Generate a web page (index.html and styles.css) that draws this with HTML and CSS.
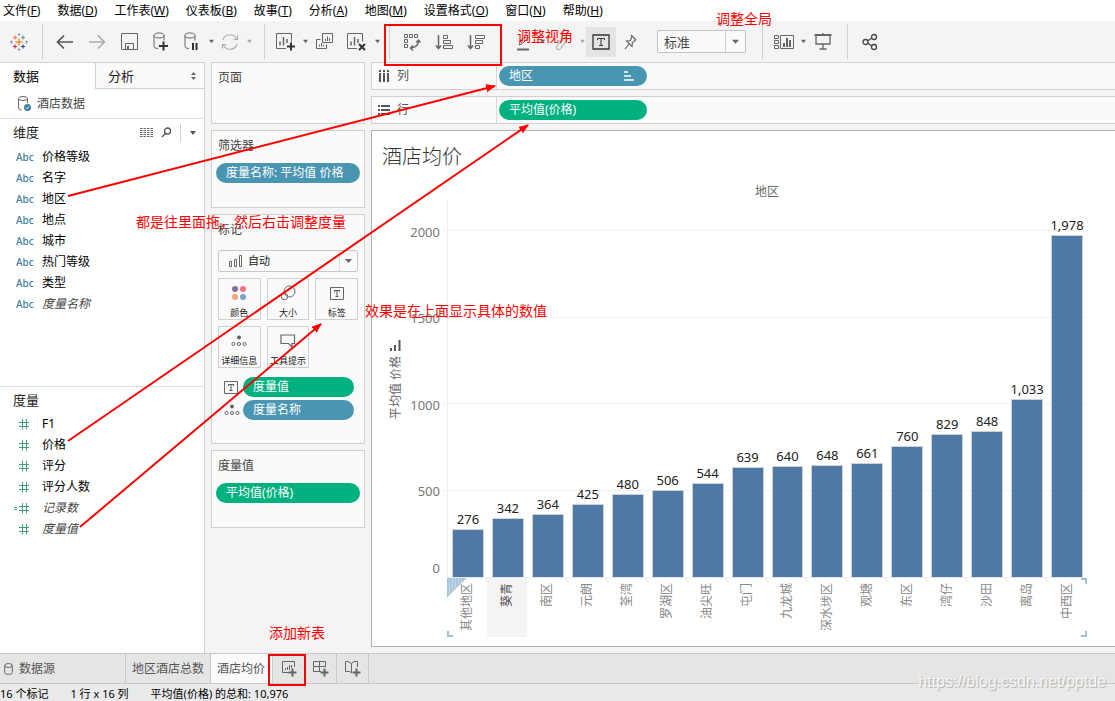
FILE: index.html
```html
<!DOCTYPE html>
<html lang="zh-CN">
<head>
<meta charset="utf-8">
<title>酒店均价</title>
<link rel="stylesheet" href="styles.css">
</head>
<body>
<svg class="defs" aria-hidden="true">
  <symbol id="caret" viewBox="0 0 8 6"><path d="M1 1h6L4 5z" fill="currentColor"/></symbol>
  <symbol id="hash" viewBox="0 0 12 12"><path d="M1 4.500h10M1 8.500h10M4.500 1v10.500M8.500 1v10.500" stroke="#3fa27b" fill="none"/></symbol>
  <symbol id="tbox" viewBox="0 0 14 13"><path d="M.5 .5h13v12H.5z" fill="none" stroke="#666"/><path d="M4.500 5V3.500h5V5M7 3.500v6M5.500 9.500h3" fill="none" stroke="#555"/></symbol>
  <symbol id="detail" viewBox="0 0 16 12"><circle cx="8" cy="2.500" r="2" fill="#666"/><g fill="none" stroke="#666"><circle cx="2.500" cy="9" r="1.600"/><circle cx="8" cy="9" r="1.600"/><circle cx="13.500" cy="9" r="1.600"/></g></symbol>
</svg>

<nav class="menu">
  <a href="#">文件(<u>F</u>)</a><a href="#">数据(<u>D</u>)</a><a href="#">工作表(<u>W</u>)</a><a href="#">仪表板(<u>B</u>)</a><a href="#">故事(<u>T</u>)</a><a href="#">分析(<u>A</u>)</a><a href="#">地图(<u>M</u>)</a><a href="#">设置格式(<u>O</u>)</a><a href="#">窗口(<u>N</u>)</a><a href="#">帮助(<u>H</u>)</a>
</nav>

<header class="toolbar">
  <button class="tool logo" aria-label="主页"><svg width="18" height="18" viewBox="0 0 18 18" fill="none" stroke-width="1.200"><path d="M9 5.500v7M5.500 9h7" stroke="#f28e2b" stroke-width="1.500"/><path d="M5 2.500v4M3 4.500h4" stroke="#e8804c"/><path d="M13 2.500v4M11 4.500h4" stroke="#5b9aa8"/><path d="M5 11.500v4M3 13.500h4" stroke="#c8324a"/><path d="M13 11.500v4M11 13.500h4" stroke="#2f4b8a"/><path d="M9 0v3M7.500 1.500h3M9 15v3M7.500 16.500h3" stroke="#8090b5" stroke-width=".8"/><path d="M1.500 7.500v3M0 9h3M16.500 7.500v3M15 9h3" stroke="#7a7cb0" stroke-width=".8"/></svg></button>
  <i class="sep first"></i>
  <button class="tool" aria-label="撤消"><svg width="18" height="16" viewBox="0 0 18 16" fill="none" stroke="#555" stroke-width="1.700"><path d="M1.500 8H17M8 1.500L1.500 8 8 14.500"/></svg></button>
  <button class="tool" aria-label="重做"><svg width="18" height="16" viewBox="0 0 18 16" fill="none" stroke="#aaa" stroke-width="1.500"><path d="M1 8h15.500M10 1.500L16.500 8 10 14.500"/></svg></button>
  <button class="tool" aria-label="保存"><svg width="17" height="17" viewBox="0 0 17 17" fill="none" stroke="#666"><path d="M.5 .5h16v16H.5zM4.500 16v-5.500h8V16"/><path d="M6 13h2v3H6z" fill="#666" stroke="none"/></svg></button>
  <button class="tool" aria-label="新建数据源"><svg width="18" height="20" viewBox="0 0 18 20" fill="none" stroke="#666"><ellipse cx="7" cy="3.500" rx="5" ry="2.500"/><path d="M2 3.500v11q0 2 4 2M12 3.500v5"/><path d="M11.500 9.500v9M7 14h9" stroke="#333" stroke-width="2"/></svg></button>
  <button class="tool narrow" aria-label="暂停自动更新"><svg width="18" height="20" viewBox="0 0 18 20" fill="none" stroke="#666"><ellipse cx="7" cy="3.500" rx="5" ry="2.500"/><path d="M2 3.500v11q0 2 4 2M12 3.500v5"/><path d="M10 11v7M13.500 11v7" stroke="#333" stroke-width="2"/></svg></button>
  <button class="drop" aria-label="更新选项"><svg width="7" height="5"><use href="#caret"/></svg></button>
  <button class="tool narrow" aria-label="刷新"><svg width="18" height="18" viewBox="0 0 18 18" fill="none" stroke="#b0b0b0" stroke-width="1.200"><path d="M2 7a7.200 7.200 0 0 1 13.500-1M16 11a7.200 7.200 0 0 1-13.500 1"/><path d="M16.500 2.500v4h-4M1.500 15.500v-4h4"/></svg></button>
  <button class="drop dim" aria-label="刷新选项"><svg width="7" height="5"><use href="#caret"/></svg></button>
  <i class="sep"></i>
  <button class="tool narrow" aria-label="新建工作表"><svg width="20" height="20" viewBox="0 0 20 20" fill="none" stroke="#666"><path d="M10 16.500H.5v-15h15v8"/><path d="M4 9.500v4M7.500 5v8.500M11 7v4" stroke-width="1.500"/><path d="M15 10.500v8M11 14.500h8" stroke="#333" stroke-width="2"/></svg></button>
  <button class="drop" aria-label="新建选项"><svg width="7" height="5"><use href="#caret"/></svg></button>
  <button class="tool" aria-label="复制"><svg width="18" height="18" viewBox="0 0 18 18" fill="none" stroke="#666"><path d="M6.500 .5h10v9h-10zM4.500 6.500h-4v9h10v-4M9.500 8V6M11.500 8V3.500M13.500 8V5M3.500 13.500v-2M5.500 13.500V10M7.500 13.500v-2"/></svg></button>
  <button class="tool" aria-label="清除"><svg width="20" height="20" viewBox="0 0 20 20" fill="none" stroke="#666"><path d="M10 16.500H.5v-15h15v8"/><path d="M4 9.500v4M7.500 5v8.500M11 7v4" stroke-width="1.500"/><path d="M12 12l6 6M18 12l-6 6" stroke="#333" stroke-width="2"/></svg></button>
  <button class="drop" aria-label="清除选项"><svg width="7" height="5"><use href="#caret"/></svg></button>
  <i class="sep tight"></i>
  <button class="tool" aria-label="交换行和列"><svg width="18" height="18" viewBox="0 0 18 18" fill="none" stroke="#666"><path d="M1.500 1.500h3v3h-3zM6.500 1.500h3v3h-3zM11.500 1.500h3v3h-3zM1.500 6.500h3v3h-3zM1.500 11.500h3v3h-3z"/><path d="M15.500 7.500c0 5-3 7-7.500 7.500M13 9.500l2.500-2.500 2 2.500M10 12.500L7.500 15l2.500 2.500" stroke-width="1.400"/></svg></button>
  <button class="tool" aria-label="升序"><svg width="19" height="16" viewBox="0 0 19 16" fill="none" stroke="#666"><path d="M3.500 1v13M1 11.500l2.500 3 2.500-3" stroke-width="1.500"/><path d="M8.500 1.500h4v3h-4zM8.500 6.500h7v3h-7zM8.500 11.500h9v3h-9z"/></svg></button>
  <button class="tool" aria-label="降序"><svg width="19" height="16" viewBox="0 0 19 16" fill="none" stroke="#666"><path d="M3.500 1v13M1 11.500l2.500 3 2.500-3" stroke-width="1.500"/><path d="M8.500 1.500h9v3h-9zM8.500 6.500h7v3h-7zM8.500 11.500h4v3h-4z"/></svg></button>
  <button class="tool narrow spaced" aria-label="突出显示"><svg width="16" height="20" viewBox="0 0 16 20" fill="none" stroke="#666"><path d="M4 13l1.500-4L11 3l2.500 2.500-6 6z"/><path d="M2 17.500h12" stroke-width="2"/></svg></button>
  <button class="drop" aria-label="突出显示选项"><svg width="7" height="5"><use href="#caret"/></svg></button>
  <button class="tool" aria-label="组成员"><svg width="14" height="18" viewBox="0 0 14 18" fill="none" stroke="#bbb" stroke-width="1.300"><path d="M5 10l4-5c2-2 4 0 3 2l-6 8c-2 3-6 1-4-2l5-7"/></svg></button>
  <button class="drop dim" aria-label="组选项"><svg width="7" height="5"><use href="#caret"/></svg></button>
  <button class="tool narrow active" aria-label="显示标记标签"><svg width="18" height="16" viewBox="0 0 18 16" fill="none" stroke="#333"><path d="M1 1h16v14H1z" stroke-width="1.300"/><path d="M5.500 6V4.500h7V6M9 4.500v7M7 11.500h4"/></svg></button>
  <button class="tool narrow" aria-label="固定轴"><svg width="14" height="18" viewBox="0 0 14 18" fill="none" stroke="#666" stroke-width="1.200"><path d="M7 2l5 5M8 3L6.500 7.500 2.500 8l5.500 5.500.500-4L12 6.500M5 11l-4 5"/></svg></button>
  <select class="fit" aria-label="适合"><option>标准</option></select>
  <i class="sep wide"></i>
  <button class="tool narrow" aria-label="智能推荐"><svg width="20" height="14" viewBox="0 0 20 14" fill="none" stroke="#666"><path d="M.5 .5h4v3h-4zM.5 5.500h4v3h-4zM.5 10.500h4v3h-4zM6.500 .5h13v13h-13z"/><path d="M10 8v4M13 3v9M16 5v7" stroke-width="2"/></svg></button>
  <button class="drop" aria-label="推荐选项"><svg width="7" height="5"><use href="#caret"/></svg></button>
  <button class="tool" aria-label="演示模式"><svg width="18" height="17" viewBox="0 0 18 17" fill="none" stroke="#666"><path d="M.5 2h17" stroke-width="2"/><path d="M2 2.500v8.500h14V2.500M9 11v5M5.500 16h7M9 0v2" stroke-width="1.300"/></svg></button>
  <i class="sep tight"></i>
  <button class="tool" aria-label="共享"><svg width="16" height="18" viewBox="0 0 16 18" fill="none" stroke="#444" stroke-width="1.300"><circle cx="3.500" cy="9" r="2.500"/><circle cx="12" cy="4" r="2.500"/><circle cx="12" cy="14" r="2.500"/><path d="M5.700 7.700l4-2.400M5.700 10.300l4 2.400"/></svg></button>
</header>

<main class="work">
  <aside class="data">
    <div class="pane-tabs">
      <button class="pane-tab on">数据</button>
      <button class="pane-tab">分析<svg width="7" height="8" viewBox="0 0 7 8"><path d="M1 3h5L3.500 0zM1 5h5L3.500 8z" fill="#666"/></svg></button>
    </div>
    <div class="source"><svg width="15" height="16" viewBox="0 0 15 16" fill="none" stroke="#666"><ellipse cx="6" cy="2.500" rx="4.500" ry="2"/><path d="M1.500 2.500v9.500q0 1.500 3 2M10.500 2.500V7"/><circle cx="10.500" cy="11.500" r="3.500" fill="#3f7f9f" stroke="none"/><path d="M9 11.500l1 1 2-2" stroke="#fff"/></svg>酒店数据</div>
    <section class="fields">
      <h2>维度<span class="tools"><svg width="13" height="10" viewBox="0 0 13 10" stroke="#666" stroke-dasharray="2.500 1"><path d="M0 .5h13M0 2.500h13M0 4.500h13M0 6.500h13M0 8.500h13"/></svg><svg width="11" height="11" viewBox="0 0 11 11" fill="none" stroke="#555" stroke-width="1.300"><circle cx="6.500" cy="4" r="3"/><path d="M4.500 6.500L1 10"/></svg><i></i><svg width="8" height="6"><use href="#caret"/></svg></span></h2>
      <ul>
        <li><b>Abc</b>价格等级</li><li><b>Abc</b>名字</li><li><b>Abc</b>地区</li><li><b>Abc</b>地点</li><li><b>Abc</b>城市</li><li><b>Abc</b>热门等级</li><li><b>Abc</b>类型</li><li><b>Abc</b><em>度量名称</em></li>
      </ul>
    </section>
    <section class="fields measures">
      <h2>度量</h2>
      <ul>
        <li><b><svg width="12" height="12"><use href="#hash"/></svg></b>F1</li>
        <li><b><svg width="12" height="12"><use href="#hash"/></svg></b>价格</li>
        <li><b><svg width="12" height="12"><use href="#hash"/></svg></b>评分</li>
        <li><b><svg width="12" height="12"><use href="#hash"/></svg></b>评分人数</li>
        <li><b class="calc"><svg width="16" height="12" viewBox="0 0 16 12" fill="none" stroke="#3fa27b"><path d="M5 4.500h10M5 8.500h10M8.500 1v10.500M12.500 1v10.500M0 5.500h3M0 7.500h3"/></svg></b><em>记录数</em></li>
        <li><b><svg width="12" height="12"><use href="#hash"/></svg></b><em>度量值</em></li>
      </ul>
    </section>
  </aside>

  <div class="cards">
    <section class="card pages"><h3>页面</h3></section>
    <section class="card filters"><h3>筛选器</h3><div class="pill blue">度量名称: 平均值 价格</div></section>
    <section class="card marks">
      <h3>标记</h3>
      <div class="mark-type"><svg width="14" height="12" viewBox="0 0 14 12" fill="none" stroke="#666"><path d="M.5 6.500h2v5h-2zM5.500 4.500h2v7h-2zM10.500 .5h2v11h-2z"/></svg><select aria-label="标记类型"><option>自动</option></select></div>
      <div class="mark-grid">
        <button><svg width="16" height="16" viewBox="0 0 16 16"><circle cx="4" cy="4" r="3" fill="#8a6f9b"/><circle cx="12" cy="4" r="3" fill="#fb6f82"/><circle cx="4" cy="12" r="3" fill="#f5a77b"/><circle cx="12" cy="12" r="3" fill="#7ba3cc"/></svg>颜色</button>
        <button><svg width="16" height="16" viewBox="0 0 16 16" fill="none" stroke="#666"><circle cx="9.500" cy="6.500" r="5.500"/><circle cx="4.500" cy="11.500" r="3.200"/></svg>大小</button>
        <button><svg width="14" height="16" viewBox="0 0 14 16"><use href="#tbox" y="2" width="14" height="13"/></svg>标签</button>
        <button><svg width="16" height="16" viewBox="0 0 16 16"><use href="#detail" y="2" width="16" height="12"/></svg>详细信息</button>
        <button><svg width="16" height="16" viewBox="0 0 16 16" fill="none" stroke="#666" stroke-width="1.200"><path d="M1 2h13.500v8.500H12V14l-3.500-3.500H1z"/></svg>工具提示</button>
      </div>
      <div class="mark-row"><svg width="14" height="13"><use href="#tbox"/></svg><div class="pill green">度量值</div></div>
      <div class="mark-row"><svg width="16" height="12"><use href="#detail"/></svg><div class="pill blue">度量名称</div></div>
    </section>
    <section class="card values"><h3>度量值</h3><div class="pill green">平均值(价格)</div></section>
  </div>

  <div class="canvas">
    <div class="shelf"><div class="shelf-name"><svg width="12" height="12" viewBox="0 0 12 12" stroke="#555" stroke-width="2"><path d="M2 0v2M6 0v2M10 0v2M2 3v9M6 3v9M10 3v9"/></svg>列</div><div class="pill blue">地区<svg width="11" height="10" viewBox="0 0 11 10" stroke="#fff" stroke-width="1.500"><path d="M0 1h4M0 5h7M0 9h10"/></svg></div></div>
    <div class="shelf"><div class="shelf-name"><svg width="12" height="12" viewBox="0 0 12 12" stroke="#555" stroke-width="2"><path d="M0 2h2M0 6h2M0 10h2M3 2h9M3 6h9M3 10h9"/></svg>行</div><div class="pill green">平均值(价格)</div></div>
    <section class="view">
      <h1>酒店均价</h1>
      <div class="chart">
        <div class="axis-title"><svg width="11" height="11" viewBox="0 0 11 11" stroke="#555" stroke-width="2"><path d="M1 8v3M5 5v6M9.500 0v11"/></svg><span>平均值 价格</span></div>
        <div class="dim-name">地区</div>
        <div class="ticks"><span style="--v:2000">2000</span><span style="--v:1500">1500</span><span style="--v:1000">1000</span><span style="--v:500">500</span><span class="zero" style="--v:0">0</span></div>
        <div class="plot">
          <i class="grid" style="--v:2000"></i><i class="grid" style="--v:1500"></i><i class="grid" style="--v:1000"></i><i class="grid" style="--v:500"></i>
          <div class="col">276<div class="bar" style="--v:276"></div></div>
          <div class="col">342<div class="bar" style="--v:342"></div></div>
          <div class="col">364<div class="bar" style="--v:364"></div></div>
          <div class="col">425<div class="bar" style="--v:425"></div></div>
          <div class="col">480<div class="bar" style="--v:480"></div></div>
          <div class="col">506<div class="bar" style="--v:506"></div></div>
          <div class="col">544<div class="bar" style="--v:544"></div></div>
          <div class="col">639<div class="bar" style="--v:639"></div></div>
          <div class="col">640<div class="bar" style="--v:640"></div></div>
          <div class="col">648<div class="bar" style="--v:648"></div></div>
          <div class="col">661<div class="bar" style="--v:661"></div></div>
          <div class="col">760<div class="bar" style="--v:760"></div></div>
          <div class="col">829<div class="bar" style="--v:829"></div></div>
          <div class="col">848<div class="bar" style="--v:848"></div></div>
          <div class="col">1,033<div class="bar" style="--v:1033"></div></div>
          <div class="col">1,978<div class="bar" style="--v:1978"></div></div>
        </div>
        <div class="names">
          <div><span>其他地区</span></div><div class="hover"><span>葵青</span></div><div><span>南区</span></div><div><span>元朗</span></div><div><span>荃湾</span></div><div><span>罗湖区</span></div><div><span>油尖旺</span></div><div><span>屯门</span></div><div><span>九龙城</span></div><div><span>深水埗区</span></div><div><span>观塘</span></div><div><span>东区</span></div><div><span>湾仔</span></div><div><span>沙田</span></div><div><span>离岛</span></div><div><span>中西区</span></div>
          <svg class="corner" width="19" height="19" viewBox="0 0 19 19"><path d="M0 0h19L0 19z" fill="#c3d9ea"/><path d="M1 0v18M4 0v15M7 0v12M10 0v9M13 0v6M16 0v3" stroke="#8db4d4"/><path d="M19 0L0 19" stroke="#a0c0dc"/></svg>
          <i class="mark bl"></i><i class="mark tr"></i><i class="mark br"></i>
        </div>
      </div>
    </section>
  </div>
</main>

<footer>
  <div class="sheets">
    <button class="sheet source-tab"><svg width="9" height="12" viewBox="0 0 9 12" fill="none" stroke="#666"><ellipse cx="4.500" cy="2.500" rx="3.800" ry="2"/><path d="M.7 2.500v7c0 2.500 7.600 2.500 7.600 0v-7"/></svg>数据源</button>
    <button class="sheet">地区酒店总数</button>
    <button class="sheet on">酒店均价</button>
    <button class="sheet icon" aria-label="新建工作表"><svg width="16" height="16" viewBox="0 0 16 16" fill="none" stroke="#666"><path d="M8 11.500H1.500v-11h12V6M4.500 9V7M6.500 9V6M8.500 9V4M10.500 7V4"/><path d="M11.500 7.500v8M7.500 11.500h8" stroke-width="2"/></svg></button>
    <button class="sheet icon" aria-label="新建仪表板"><svg width="16" height="16" viewBox="0 0 16 16" fill="none" stroke="#666"><path d="M8 10.500H.5v-10h12V6M.5 5.500h12M6.500 .5v10"/><path d="M11.500 7.500v8M7.500 11.500h8" stroke-width="2"/></svg></button>
    <button class="sheet icon" aria-label="新建故事"><svg width="16" height="16" viewBox="0 0 16 16" fill="none" stroke="#666"><path d="M7 12L4.500 10.500H.5v-10L3 .5l3.500 2L9 .5h3.500V6M6.500 2.500v9"/><path d="M11.500 7.500v8M7.500 11.500h8" stroke-width="2"/></svg></button>
  </div>
  <div class="status"><span>16 个标记</span><span>1 行 x 16 列</span><span class="sum">平均值(价格) 的总和: 10,976</span></div>
</footer>

<div class="notes">
  <svg class="arrows" aria-hidden="true">
    <defs><marker id="tip" viewBox="0 0 10 8" refX="9" refY="4" markerWidth="10" markerHeight="8" markerUnits="userSpaceOnUse" orient="auto"><path d="M0 0l10 4L0 8z" fill="red"/></marker></defs>
    <g fill="none" stroke="red" stroke-width="2"><path d="M68 196L495 86" marker-end="url(#tip)"/><path d="M68 441L528 125" marker-end="url(#tip)"/><path d="M80 527L321 324" marker-end="url(#tip)"/><rect x="385" y="25" width="116" height="40"/><rect x="269" y="655" width="36" height="30"/></g>
  </svg>
  <span class="note global">调整全局</span>
  <span class="note angle">调整视角</span>
  <span class="note drag">都是往里面拖，然后右击调整度量</span>
  <span class="note effect">效果是在上面显示具体的数值</span>
  <span class="note add">添加新表</span>
  <span class="watermark">https://blog.csdn.net/pptde</span>
</div>
</body>
</html>
```

FILE: styles.css
```css
* { box-sizing: border-box; }
body {
  margin: 0;
  min-height: 100vh;
  display: flex;
  flex-direction: column;
  position: relative;
  overflow: hidden;
  background: #f4f4f4;
  color: #222;
  font: 12px/20px "Noto Sans", "Noto Sans CJK SC", sans-serif;
}
button, select { font: inherit; color: inherit; }
button { margin: 0; padding: 0; border: 0; background: none; }
h1, h2, h3, ul { margin: 0; padding: 0; font-weight: 400; }
ul { list-style: none; }
svg { display: block; flex: none; }
.defs { position: absolute; width: 0; height: 0; }

.menu { display: flex; gap: 17px; height: 21px; padding-left: 3px; background: #fff; }
.menu a { color: #000; text-decoration: none; white-space: nowrap; line-height: 22px; }

.toolbar { display: flex; align-items: center; height: 41px; color: #666; }
.tool { display: grid; place-items: center; width: 32px; height: 30px; flex: none; }
.tool.narrow { width: 30px; }
.tool.logo { width: 42px; padding-right: 5px; }
.tool.active { background: #e4e4e4; }
.tool.spaced { margin-left: 16px; }
.drop { display: grid; place-items: center; width: 8px; height: 30px; flex: none; }
.drop.dim { color: #aaa; }
.sep { width: 1px; height: 35px; margin: 0 6px 0 11px; background: #d0d0d0; flex: none; }
.sep.first { margin-left: 0; }
.sep.tight { margin-left: 8px; }
.sep.wide { margin-left: 16px; }
.fit {
  width: 89px; height: 23px; margin-left: 11px; padding: 0 6px;
  border: 1px solid #c4c4c4; border-radius: 2px; appearance: none; color: #444; font-size: 13px;
  background: url("data:image/svg+xml,%3Csvg xmlns='http://www.w3.org/2000/svg' width='20' height='22'%3E%3Cpath d='M.5 0v22' stroke='%23d0d0d0'/%3E%3Cpath d='M7 9h7l-3.500 4z' fill='%23666'/%3E%3C/svg%3E") right center no-repeat #fafafa;
}

.work { display: flex; flex: 1; min-height: 0; }
.data { width: 205px; display: flex; flex-direction: column; background: #fff; border-right: 1px solid #d0d0d0; flex: none; }
.pane-tabs { display: flex; height: 27px; font-size: 13px; color: #222; }
.pane-tab { display: flex; align-items: center; justify-content: space-between; flex: 1; padding: 0 7px 0 12px; border: solid #d0d0d0; border-width: 1px 0 1px 1px; background: #fafafa; }
.pane-tab.on { flex: 0 0 95px; padding-left: 13px; background: #fff; border-width: 1px 0 0; color: #000; }
.source { display: flex; align-items: center; gap: 5px; height: 30px; padding-left: 17px; border-bottom: 1px solid #e0e0e0; color: #444; }
.fields { flex: 1; }
.measures { border-top: 1px solid #e0e0e0; }
.fields h2 { display: flex; justify-content: space-between; height: 27px; padding-left: 13px; font-size: 13px; line-height: 27px; }
.tools { display: flex; align-items: center; gap: 8px; padding-right: 7px; color: #555; }
.tools i { width: 1px; height: 18px; background: #d0d0d0; }
.fields li { display: flex; align-items: center; height: 21px; color: #000; }
.fields li b { width: 42px; padding-left: 16px; color: #3f7f9f; font-size: 10px; font-weight: 500; }
.measures li b { padding-left: 18px; }
.measures li b.calc { padding-left: 14px; }
.fields em { color: #444; }

.cards { width: 166px; padding: 0 6px; display: flex; flex-direction: column; gap: 6px; flex: none; }
.card { border: 1px solid #d0d0d0; background: #fafafa; padding: 5px 4px; }
.card h3 { padding-left: 2px; font-size: 12px; line-height: 20px; color: #444; }
.pages { height: 62px; }
.filters, .values { height: 78px; }
.marks { height: 230px; padding: 5px 6px; }
.marks h3 { padding-left: 0; }
.pill { display: flex; align-items: center; justify-content: space-between; height: 20px; padding: 0 12px 0 10px; border-radius: 10px; color: #fff; white-space: nowrap; }
.card > .pill { margin-top: 7px; }
.blue { background: #4996b2; }
.green { background: #00b180; }
.mark-type { display: flex; align-items: center; gap: 5px; margin-top: 10px; height: 22px; padding-left: 10px; border: 1px solid #c8c8c8; border-radius: 2px; }
.mark-type select {
  flex: 1; height: 20px; border: 0; padding: 0; font-size: 11px; appearance: none;
  background: url("data:image/svg+xml,%3Csvg xmlns='http://www.w3.org/2000/svg' width='18' height='20'%3E%3Cpath d='M.5 0v20' stroke='%23e0e0e0'/%3E%3Cpath d='M6 8h7l-3.500 4z' fill='%23666'/%3E%3C/svg%3E") right center no-repeat;
}
.mark-grid { display: grid; grid-template-columns: repeat(3, 1fr); gap: 6px; margin: 6px 0 9px; }
.mark-grid button { display: flex; flex-direction: column; align-items: center; justify-content: space-between; height: 42px; padding-top: 6px; border: 1px solid #d0d0d0; font-size: 9px; line-height: 12px; white-space: nowrap; }
.mark-row { display: flex; align-items: center; padding: 0 4px 0 6px; height: 20px; margin-bottom: 3px; }
.mark-row svg { margin-right: auto; }
.mark-row .pill { width: 111px; }

.canvas { flex: 1; min-width: 0; display: flex; flex-direction: column; gap: 6px; padding-bottom: 6px; }
.shelf { display: flex; align-items: center; height: 28px; border: solid #d0d0d0; border-width: 1px 0 1px 1px; background: #fafafa; }
.shelf-name { display: flex; align-items: center; gap: 7px; width: 125px; height: 26px; padding-left: 6px; border-right: 1px solid #d8d8d8; color: #555; }
.shelf .pill { width: 148px; margin-left: 2px; }
.view { flex: 1; display: flex; flex-direction: column; border: solid #b0b0b0; border-width: 1px 0 1px 1px; background: #fff; padding: 11px 28px 9px 10px; }
.view h1 { font-size: 20px; line-height: 30px; font-weight: 300; color: #333; }

.chart {
  flex: 1; display: grid; margin-top: 10px;
  grid-template: 18px minmax(0, 1fr) 59px / 31px 34px minmax(0, 1fr);
}
.axis-title { grid-area: 1 / 1 / 4 / 2; display: flex; flex-direction: column; align-items: center; gap: 5px; padding: 158px 4px 0 0; color: #666; }
.axis-title span, .names span { writing-mode: vertical-rl; text-orientation: sideways; transform: rotate(180deg); white-space: nowrap; }
.dim-name { grid-area: 1 / 3; text-align: center; color: #666; }
.ticks { grid-area: 2 / 2; position: relative; color: #777; font-size: 13px; }
.ticks span { position: absolute; right: 7px; bottom: calc(var(--v) / 2182 * 100% - 10px); }
.ticks .zero { bottom: 0; }
.plot { grid-area: 2 / 3; position: relative; display: grid; grid-template-columns: repeat(16, 1fr); border-left: 1px solid #f0f0f0; border-bottom: 1px solid #e8e8e8; }
.grid { position: absolute; left: -5px; right: 0; bottom: calc(var(--v) / 2182 * 100%); height: 1px; background: #f0f0f0; }
.col { position: relative; display: flex; flex-direction: column; justify-content: flex-end; text-align: center; font-size: 13px; min-width: 0; }
.bar { height: calc(var(--v) / 2182 * 100%); flex: none; margin: 0 4px; border: 1px solid #d0d0d0; border-bottom: 0; background: #4e79a7; }
.names { grid-area: 3 / 3; position: relative; display: grid; grid-template-columns: repeat(16, 1fr); color: #888; }
.names div { display: flex; justify-content: center; align-items: flex-start; padding-top: 5px; background: linear-gradient(#e8e8e8, #e8e8e8) right top / 1px 4px no-repeat; }
.names .hover { background: #f4f4f4; color: #555; }
.corner { position: absolute; left: 0; top: 0; }
.mark { position: absolute; width: 6px; height: 6px; border: 0 solid #a0c0dc; }
.bl { left: 0; bottom: 0; border-width: 0 0 2px 2px; }
.tr { right: 0; top: 0; border-width: 2px 2px 0 0; }
.br { right: 0; bottom: 0; border-width: 0 2px 2px 0; }

.sheets { display: flex; height: 31px; border: solid #c8c8c8; border-width: 1px 0; background: #e5e5e5; color: #555; }
.sheet { display: flex; align-items: center; gap: 6px; padding: 0 6px; border-right: 1px solid #c8c8c8; white-space: nowrap; }
.source-tab { width: 126px; padding-left: 4px; }
.sheet.on { width: 62px; background: #fafafa; }
.sheet.icon { width: 32px; justify-content: center; }
.status { display: flex; gap: 22px; height: 17px; line-height: 20px; font-size: 11px; background: #eaeaea; color: #000; }

.notes { position: absolute; inset: 0; pointer-events: none; }
.arrows { position: absolute; inset: 0; width: 100%; height: 100%; }
.note { position: absolute; color: red; font-size: 14px; white-space: nowrap; }
.global { left: 716px; top: 9px; }
.angle { left: 517px; top: 26px; }
.drag { left: 136px; top: 212px; }
.effect { left: 365px; top: 301px; }
.add { left: 269px; top: 623px; }
.watermark { position: absolute; right: 9px; bottom: 9px; font: 16px/20px "Liberation Sans", sans-serif; color: #f6f6f6; text-shadow: 1px 1px 1px #aaa; }
```
